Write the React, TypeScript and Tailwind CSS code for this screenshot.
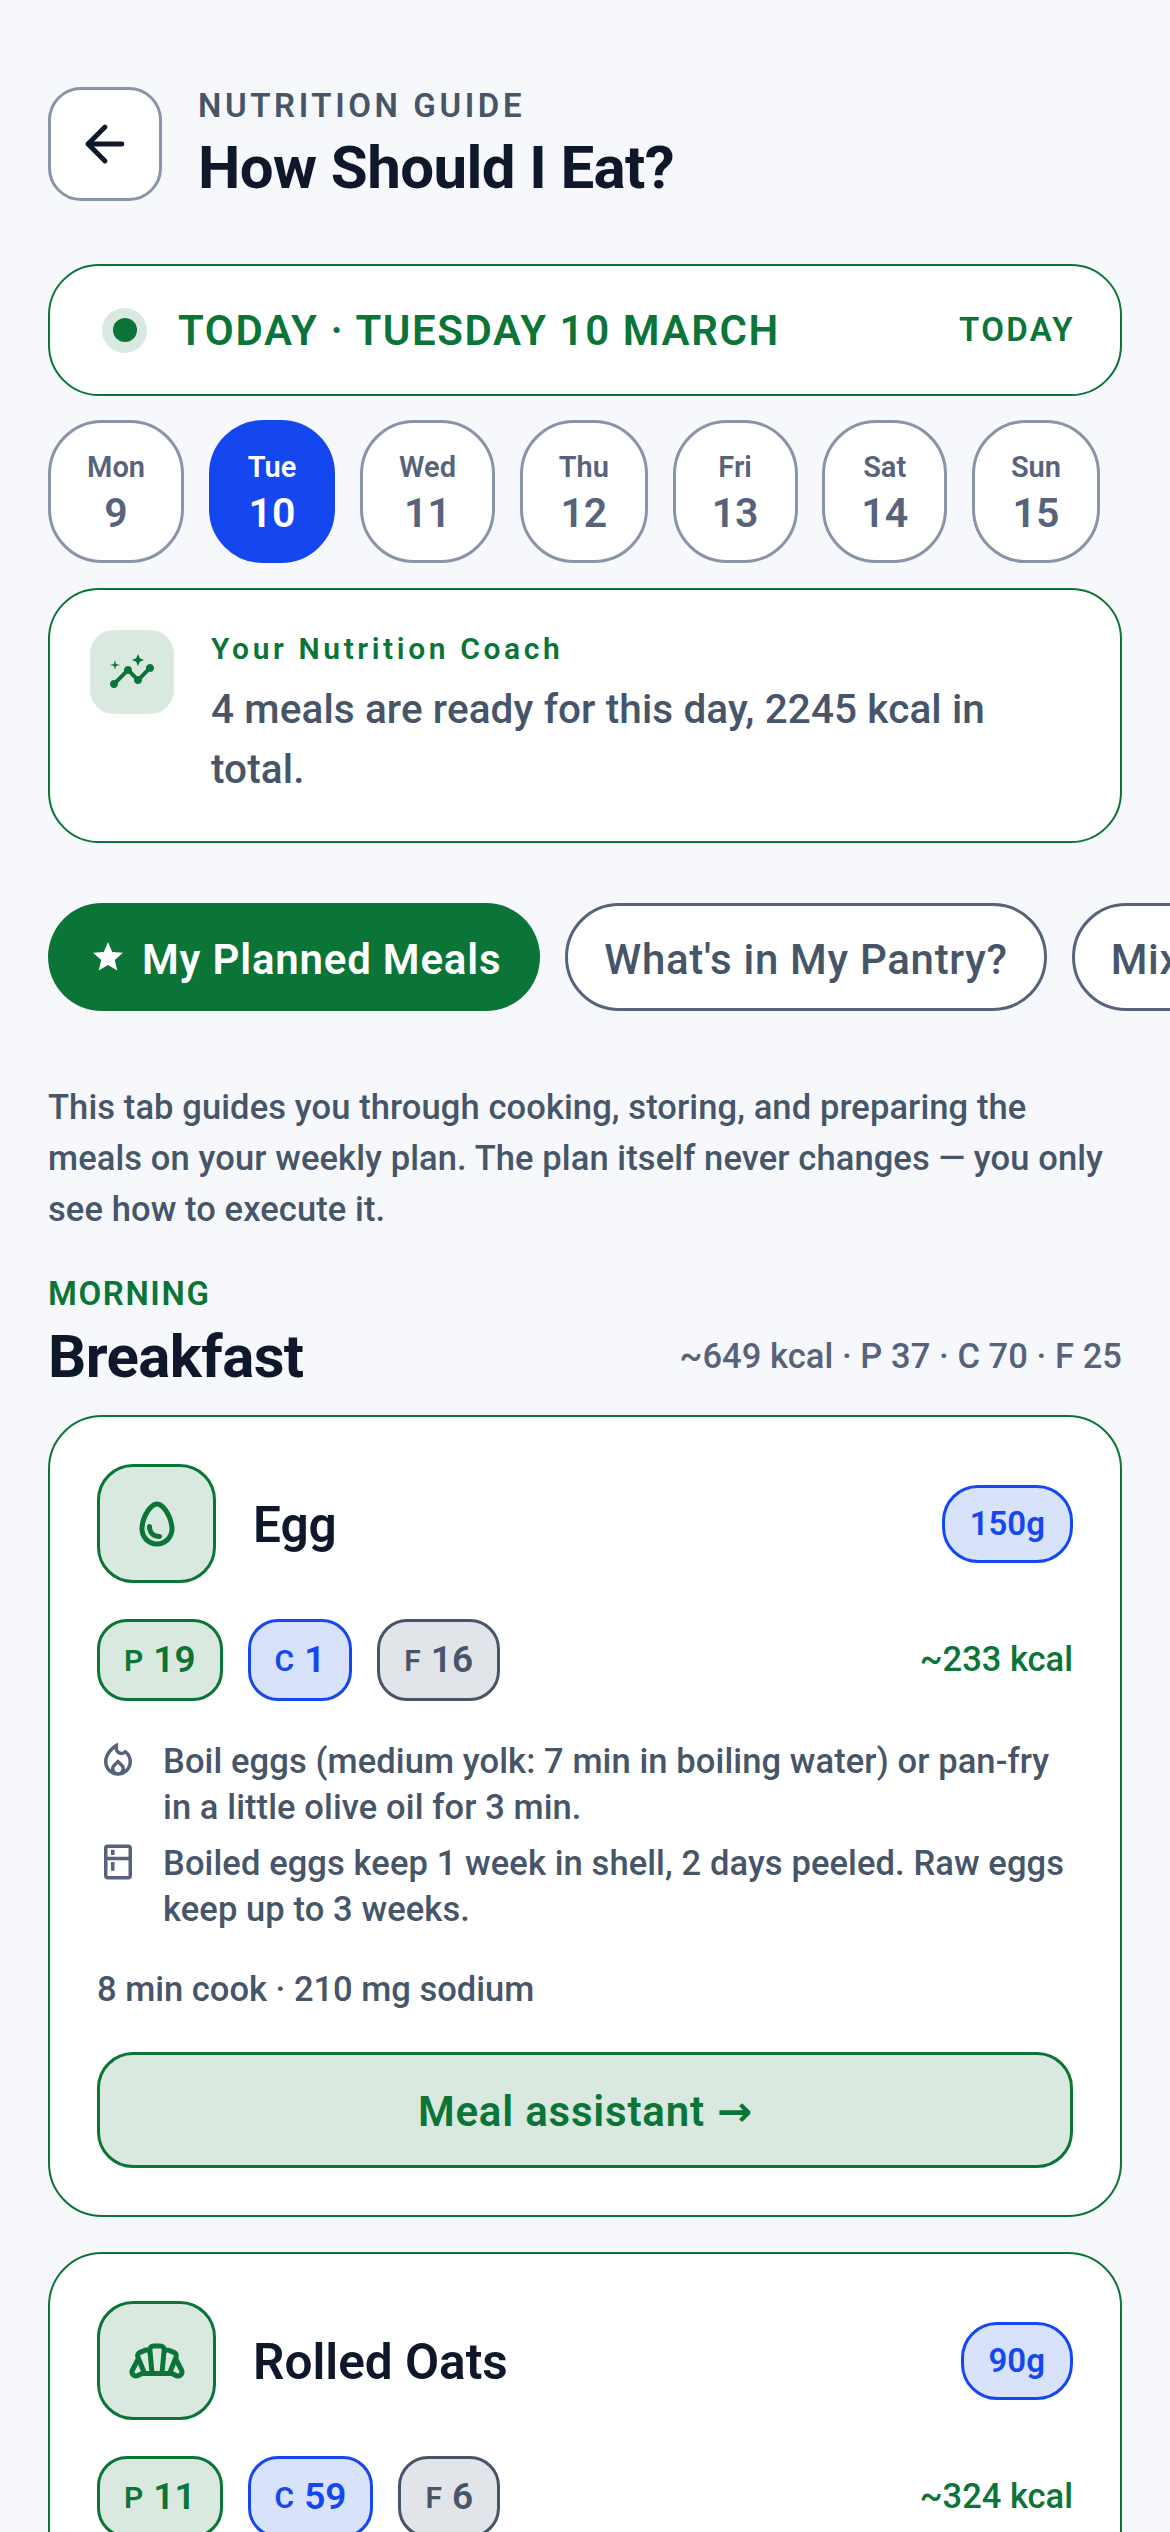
import React from 'react';
import { ArrowLeft } from 'lucide-react';
import {
  MdInsights,
  MdOutlineBakeryDining,
  MdOutlineEgg,
  MdOutlineKitchen,
  MdOutlineLocalFireDepartment,
  MdStar,
} from 'react-icons/md';

const days = [
  { label: 'Mon', num: 9 },
  { label: 'Tue', num: 10, active: true },
  { label: 'Wed', num: 11 },
  { label: 'Thu', num: 12 },
  { label: 'Fri', num: 13 },
  { label: 'Sat', num: 14 },
  { label: 'Sun', num: 15 },
];

const Macros = ({ p, c, f, kcal }: { p: number; c: number; f: number; kcal: number }) => (
  <div className="flex items-center justify-between">
    <div className="flex gap-[25px]">
      <div className="flex h-[82px] items-center gap-[10px] rounded-[30px] border-[3px] border-[#0b7437] bg-[#d9e9df] px-[24px] text-[#0b7437]">
        <span className="text-[30px] font-semibold">P</span>
        <span className="text-[37px] font-semibold">{p}</span>
      </div>
      <div className="flex h-[82px] items-center gap-[10px] rounded-[30px] border-[3px] border-[#1447ef] bg-[#d8e2fb] px-[24px] text-[#1447ef]">
        <span className="text-[30px] font-semibold">C</span>
        <span className="text-[37px] font-semibold">{c}</span>
      </div>
      <div className="flex h-[82px] items-center gap-[10px] rounded-[30px] border-[3px] border-[#475569] bg-[#e1e4e9] px-[24px] text-[#475569]">
        <span className="text-[30px] font-semibold">F</span>
        <span className="text-[37px] font-semibold">{f}</span>
      </div>
    </div>
    <span className="text-[34.5px] font-medium text-[#0b7437]">~{kcal} kcal</span>
  </div>
);

const MealHead = ({ icon, name, grams }: { icon: React.ReactNode; name: string; grams: string }) => (
  <div className="flex items-center justify-between">
    <div className="flex items-center gap-[37px]">
      <div className="flex h-[119px] w-[119px] items-center justify-center rounded-[36px] border-[3px] border-[#0b7437] bg-[#d9e9df] text-[#0b7437]">
        {icon}
      </div>
      <span className="pt-[4px] text-[49.5px] font-semibold text-[#0f172a]">{name}</span>
    </div>
    <div className="flex h-[78px] items-center rounded-[36px] border-[3px] border-[#1447ef] bg-[#d8e2fb] px-[25px] text-[33px] font-semibold text-[#1447ef]">
      {grams}
    </div>
  </div>
);

export default function App() {
  return (
    <div className="h-[2532px] overflow-hidden bg-[#f6f8fc] px-[48px] pt-[87px] font-['Roboto',sans-serif]">
      <div className="flex h-[114px] items-center gap-[36px]">
        <button className="flex h-[114px] w-[114px] items-center justify-center rounded-[33px] border-[3px] border-[#8a94a8] bg-white text-[#0f172a]">
          <ArrowLeft size={58} strokeWidth={2} />
        </button>
        <div>
          <div className="text-[33px] leading-[36px] font-semibold tracking-[3.6px] text-[#475569]">NUTRITION GUIDE</div>
          <div className="mt-[12px] text-[60px] leading-[64px] font-bold tracking-[-0.6px] text-[#0f172a]">How Should I Eat?</div>
        </div>
      </div>

      <div className="mt-[63px] flex h-[132px] items-center justify-between rounded-[51px] border-2 border-[#0b7437] bg-white pr-[45px] pl-[52px]">
        <div className="flex items-center gap-[31px]">
          <div className="flex h-[45px] w-[45px] items-center justify-center rounded-full bg-[#d9e9df]">
            <div className="h-[24px] w-[24px] rounded-full bg-[#0b7437]" />
          </div>
          <span className="text-[42px] font-semibold tracking-[1.6px] text-[#0b7437]">TODAY · TUESDAY 10 MARCH</span>
        </div>
        <span className="text-[33px] font-semibold tracking-[2.4px] text-[#0b7437]">TODAY</span>
      </div>

      <div className="mt-[24px] flex gap-[24.75px]">
        {days.map((d) => (
          <div
            key={d.label}
            className={
              d.active
                ? 'flex h-[143px] flex-col items-center justify-center rounded-[54px] border-[3px] border-[#1447ef] bg-[#1447ef] px-[36px] text-white'
                : 'flex h-[143px] flex-col items-center justify-center rounded-[54px] border-[3px] border-[#8a94a8] bg-white px-[36px] text-[#56637a]'
            }
          >
            <span className="text-[29px] leading-[42px] font-semibold">{d.label}</span>
            <span className="text-[41px] leading-[50px] font-semibold">{d.num}</span>
          </div>
        ))}
      </div>

      <div className="mt-[25px] flex h-[255px] gap-[37px] rounded-[51px] border-2 border-[#0b7437] bg-white px-[40px] pt-[41px]">
        <div className="-mt-px flex h-[84px] w-[84px] shrink-0 items-center justify-center rounded-[24px] bg-[#d9e9df] text-[#0b7437]">
          <MdInsights size={48} />
        </div>
        <div>
          <div className="text-[30px] leading-[36px] font-semibold tracking-[3.6px] text-[#0b7437]">Your Nutrition Coach</div>
          <div className="mt-[12px] text-[40.5px] leading-[60px] font-medium tracking-[0.1px] text-[#475569]">
            4 meals are ready for this day, 2245 kcal in total.
          </div>
        </div>
      </div>

      <div className="mt-[60px] -mr-[48px] flex gap-[25px] overflow-hidden whitespace-nowrap">
        <div className="flex h-[108px] shrink-0 items-center gap-[16px] rounded-[54px] bg-[#0b7437] pr-[39px] pl-[42px] text-[42px] font-semibold tracking-[0.8px] text-white">
          <MdStar size={36} />
          <span className="pt-[4px]">My Planned Meals</span>
        </div>
        <div className="flex h-[108px] shrink-0 items-center rounded-[54px] border-[3px] border-[#56637a] bg-white px-[36px] pt-[4px] text-[42px] font-medium tracking-[0.7px] text-[#475569]">
          What's in My Pantry?
        </div>
        <div className="flex h-[108px] shrink-0 items-center rounded-[54px] border-[3px] border-[#56637a] bg-white px-[36px] pt-[4px] text-[42px] font-medium tracking-[0.7px] text-[#475569]">
          Mix &amp; Match
        </div>
      </div>

      <p className="mt-[71px] text-[34.5px] leading-[51px] font-medium tracking-[0.1px] text-[#475569]">
        This tab guides you through cooking, storing, and preparing the meals on your weekly plan. The plan itself never changes — you only see how to execute it.
      </p>

      <div className="mt-[38px] text-[33px] leading-[42px] font-semibold tracking-[1.6px] text-[#0b7437]">MORNING</div>
      <div className="mt-[7px] flex items-center justify-between">
        <span className="text-[60px] leading-[70px] font-bold tracking-[-0.6px] text-[#0f172a]">Breakfast</span>
        <span className="text-[34.5px] font-medium tracking-[0.05px] text-[#56637a]">~649 kcal · P 37 · C 70 · F 25</span>
      </div>

      <div className="mt-[23px] rounded-[54px] border-2 border-[#0b7437] bg-white p-[47px]">
        <MealHead icon={<MdOutlineEgg size={60} />} name="Egg" grams="150g" />
        <div className="mt-[36px]">
          <Macros p={19} c={1} f={16} kcal={233} />
        </div>
        <div className="mt-[38px] flex flex-col gap-[11px]">
          <div className="flex gap-[24px]">
            <MdOutlineLocalFireDepartment size={42} className="shrink-0 text-[#56637a]" />
            <span className="text-[34.5px] leading-[45.5px] font-medium tracking-[0.1px] text-[#475569]">
              Boil eggs (medium yolk: 7 min in boiling water) or pan-fry in a little olive oil for 3 min.
            </span>
          </div>
          <div className="flex gap-[24px]">
            <MdOutlineKitchen size={42} className="shrink-0 text-[#56637a]" />
            <span className="text-[34.5px] leading-[45.5px] font-medium tracking-[0.1px] text-[#475569]">
              Boiled eggs keep 1 week in shell, 2 days peeled. Raw eggs keep up to 3 weeks.
            </span>
          </div>
        </div>
        <div className="mt-[35px] text-[34.5px] leading-[45px] font-medium text-[#475569]">8 min cook · 210 mg sodium</div>
        <button className="mt-[40px] flex h-[116px] w-full items-center justify-center gap-[12px] rounded-[36px] border-[3px] border-[#0b7437] bg-[#d9e9df] pt-[2px] text-[42px] font-semibold tracking-[0.8px] text-[#0b7437]">
          Meal assistant <span className="font-['DejaVu_Sans'] font-bold tracking-normal">→</span>
        </button>
      </div>

      <div className="mt-[35px] rounded-[54px] border-2 border-[#0b7437] bg-white p-[47px]">
        <MealHead icon={<MdOutlineBakeryDining size={60} />} name="Rolled Oats" grams="90g" />
        <div className="mt-[36px]">
          <Macros p={11} c={59} f={6} kcal={324} />
        </div>
      </div>
    </div>
  );
}
